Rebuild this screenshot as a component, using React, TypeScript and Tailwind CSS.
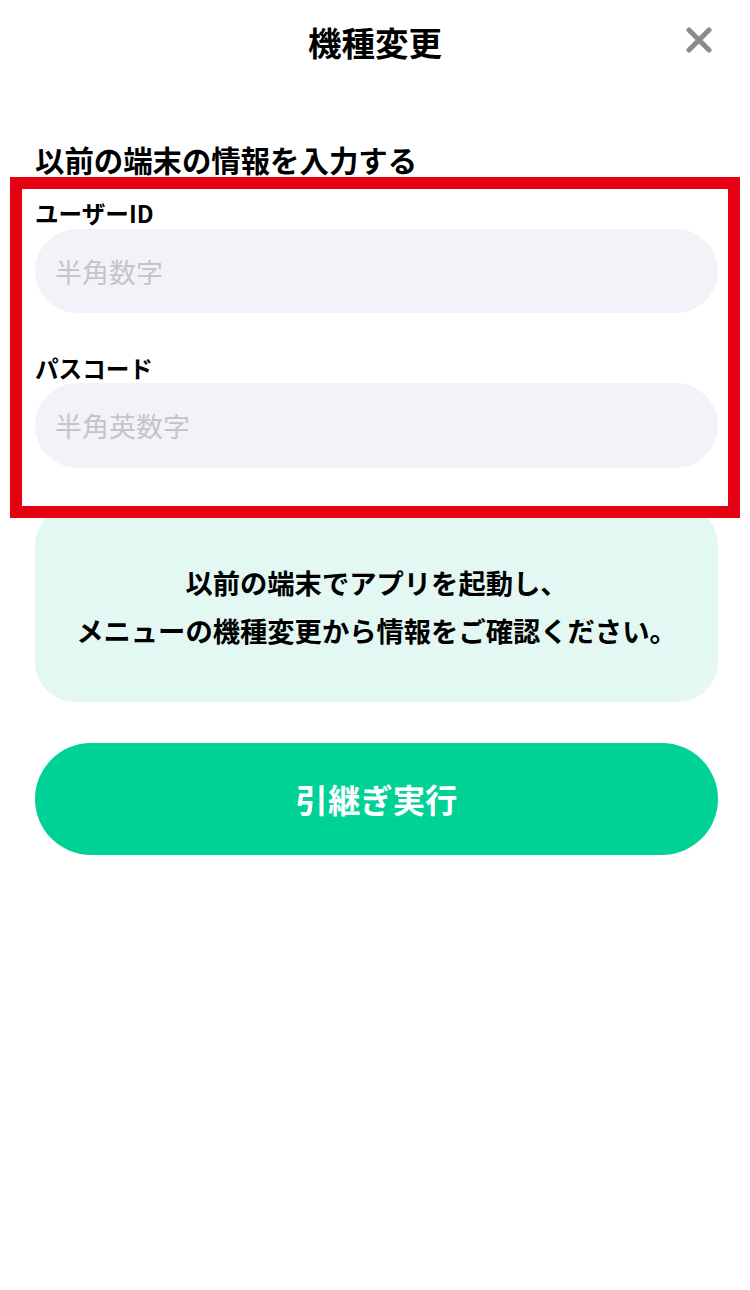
export default function App() {
  return (
    <main
      className="min-h-[1290px] w-full bg-white text-black"
      style={{ fontFamily: '"Noto Sans CJK JP", "Noto Sans", sans-serif' }}
    >
      <header className="relative flex h-[84px] items-center justify-center">
        <h1 className="text-[33.5px] font-bold leading-none">機種変更</h1>
        <button className="absolute right-[38px] top-[27px] h-[26px] w-[26px]" aria-label="閉じる">
          <svg viewBox="0 0 26 26" className="h-[26px] w-[26px]">
            <path d="M3 3 L23 23 M23 3 L3 23" stroke="#8a8a8a" strokeWidth="5" strokeLinecap="round" fill="none" />
          </svg>
        </button>
      </header>

      <div className="pl-[35px] pr-[32px]">
        <h2 className="mt-[58px] text-[29.4px] font-bold leading-[35px]">以前の端末の情報を入力する</h2>

        <section className="relative z-10 -ml-[25px] -mr-[22px] border-[12px] border-[#e60012] bg-white pb-[38px] pl-[13px] pr-[10px] pt-[10px]">
          <label className="block text-[23.6px] font-bold leading-[28px]">ユーザーID</label>
          <input
            placeholder="半角数字"
            className="mt-[2px] block h-[84px] w-full rounded-full bg-[#f2f3f8] pl-[20px] text-[27px] outline-none placeholder:text-[#c4c4ca]"
          />

          <label className="mt-[41px] block text-[23.6px] font-bold leading-[28px]">パスコード</label>
          <input
            placeholder="半角英数字"
            className="mt-[1px] block h-[85px] w-full rounded-full bg-[#f2f3f8] pl-[20px] text-[27px] outline-none placeholder:text-[#c4c4ca]"
          />
        </section>

        <div className="-mt-[13px] rounded-[40px] bg-[#e3f8f2] pb-[48px] pt-[53px] text-center text-[27.3px] font-bold leading-[48px]">
          <p>以前の端末でアプリを起動し、</p>
          <p>メニューの機種変更から情報をご確認ください。</p>
        </div>

        <button className="mt-[41px] flex h-[112px] w-full items-center justify-center rounded-full bg-[#00d296] text-[32.4px] font-bold text-white">
          引継ぎ実行
        </button>
      </div>
    </main>
  );
}
